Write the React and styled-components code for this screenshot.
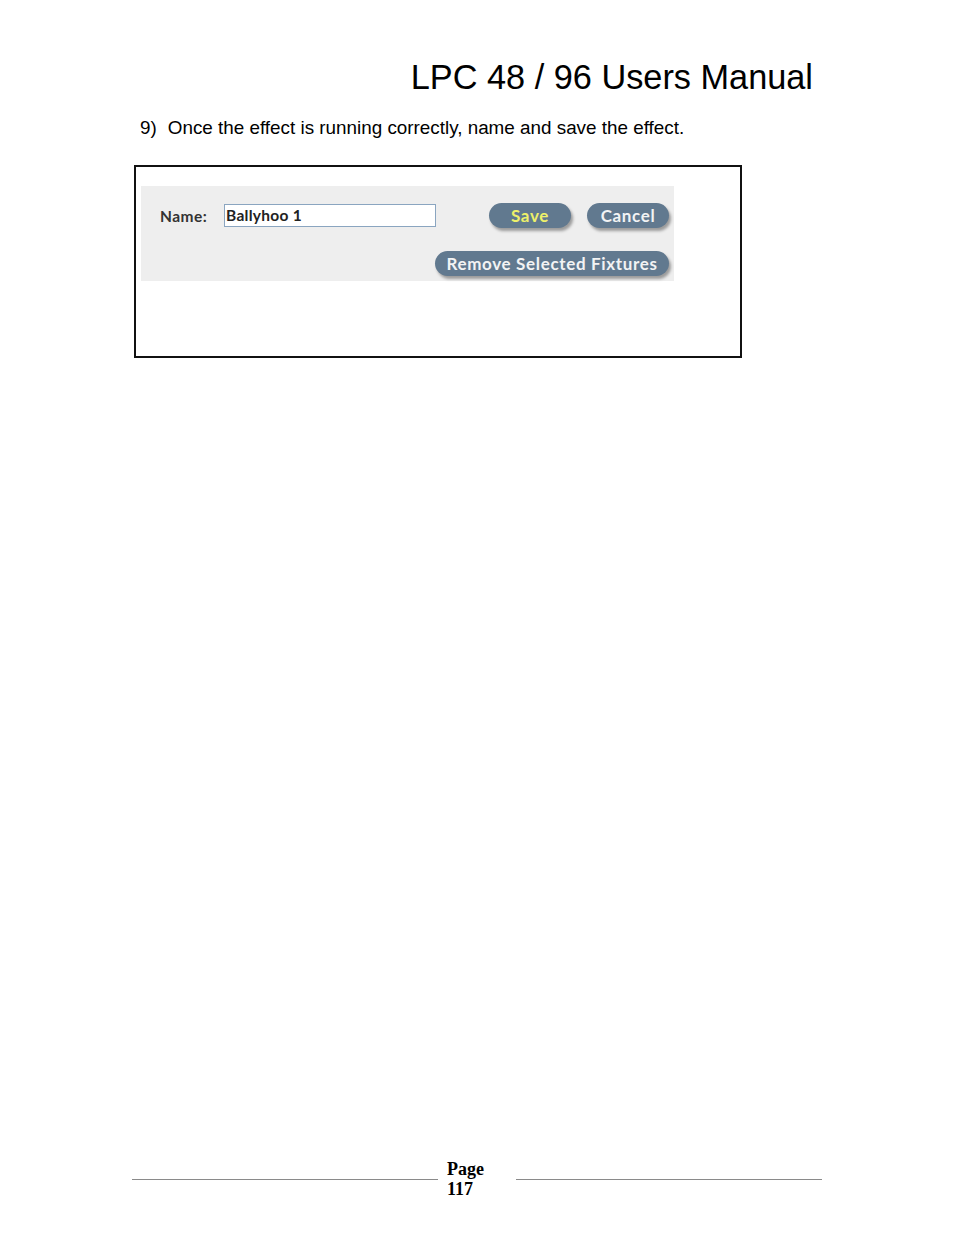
import React from 'react';
import styled, { createGlobalStyle } from 'styled-components';

const GlobalStyle = createGlobalStyle`
  html, body {
    margin: 0;
    padding: 0;
    background: #fff;
  }
`;

const Page = styled.div`
  width: 954px;
  height: 1235px;
  display: flex;
  flex-direction: column;
  box-sizing: border-box;
  font-family: "Liberation Sans", Arial, sans-serif;
  color: #000;
`;

const Title = styled.h1`
  margin: 59px 141px 0 0;
  text-align: right;
  font-size: 34.3px;
  line-height: 36px;
  font-weight: 400;
`;

const Step = styled.p`
  margin: 24px 0 0 140px;
  font-size: 18.85px;
  line-height: 18px;
  display: flex;
  gap: 11px;
`;

const Frame = styled.div`
  margin: 28px 0 0 134px;
  width: 608px;
  height: 193px;
  box-sizing: border-box;
  border: 2px solid #111;
  padding: 19px 0 0 5px;
`;

const Panel = styled.div`
  width: 533px;
  height: 95px;
  box-sizing: border-box;
  background: #eeeeee;
  padding: 17px 5px 5px 19px;
  display: flex;
  flex-direction: column;
  gap: 23px;
  font-family: "Lato", "DejaVu Sans", sans-serif;
  font-weight: 700;
`;

const Row = styled.div`
  display: flex;
  align-items: center;
  justify-content: ${({ $end }) => ($end ? 'flex-end' : 'flex-start')};
`;

const Label = styled.span`
  font-size: 15.5px;
  letter-spacing: 0.5px;
  color: #333;
  width: 64px;
`;

const NameInput = styled.div`
  width: 212px;
  height: 23px;
  box-sizing: border-box;
  border: 1px solid #8aa5c0;
  background: #fff;
  font-size: 15.5px;
  letter-spacing: 0.3px;
  line-height: 21px;
  padding-left: 1px;
  color: #222;
`;

const Buttons = styled.div`
  margin-left: auto;
  display: flex;
  gap: 16px;
`;

const Button = styled.div`
  width: ${({ $w }) => $w}px;
  height: 25px;
  border-radius: 13px;
  background: #61798f;
  box-shadow: 2px 3px 3px rgba(0, 0, 0, 0.35);
  color: ${({ $yellow }) => ($yellow ? '#eef06a' : '#f2f3f4')};
  font-size: 17px;
  line-height: 25px;
  text-align: center;
  letter-spacing: 0.65px;
`;

const Footer = styled.footer`
  margin-top: auto;
  padding: 0 0 36px 132px;
  display: flex;
  align-items: center;
`;

const Rule = styled.div`
  width: 306px;
  height: 1px;
  background: #8a8a8a;
`;

const PageNo = styled.div`
  width: 69px;
  margin-left: 9px;
  font-family: "Liberation Serif", "Times New Roman", serif;
  font-weight: 700;
  font-size: 18px;
  line-height: 20px;
`;

export default function App() {
  return (
    <Page>
      <GlobalStyle />
      <Title>LPC 48 / 96 Users Manual</Title>
      <Step>
        <span>9)</span>
        <span>Once the effect is running correctly, name and save the effect.</span>
      </Step>
      <Frame>
        <Panel>
          <Row>
            <Label>Name:</Label>
            <NameInput>Ballyhoo 1</NameInput>
            <Buttons>
              <Button $w={82} $yellow>Save</Button>
              <Button $w={82}>Cancel</Button>
            </Buttons>
          </Row>
          <Row $end>
            <Button $w={234}>Remove Selected Fixtures</Button>
          </Row>
        </Panel>
      </Frame>
      <Footer>
        <Rule />
        <PageNo>
          Page
          <br />
          117
        </PageNo>
        <Rule />
      </Footer>
    </Page>
  );
}
